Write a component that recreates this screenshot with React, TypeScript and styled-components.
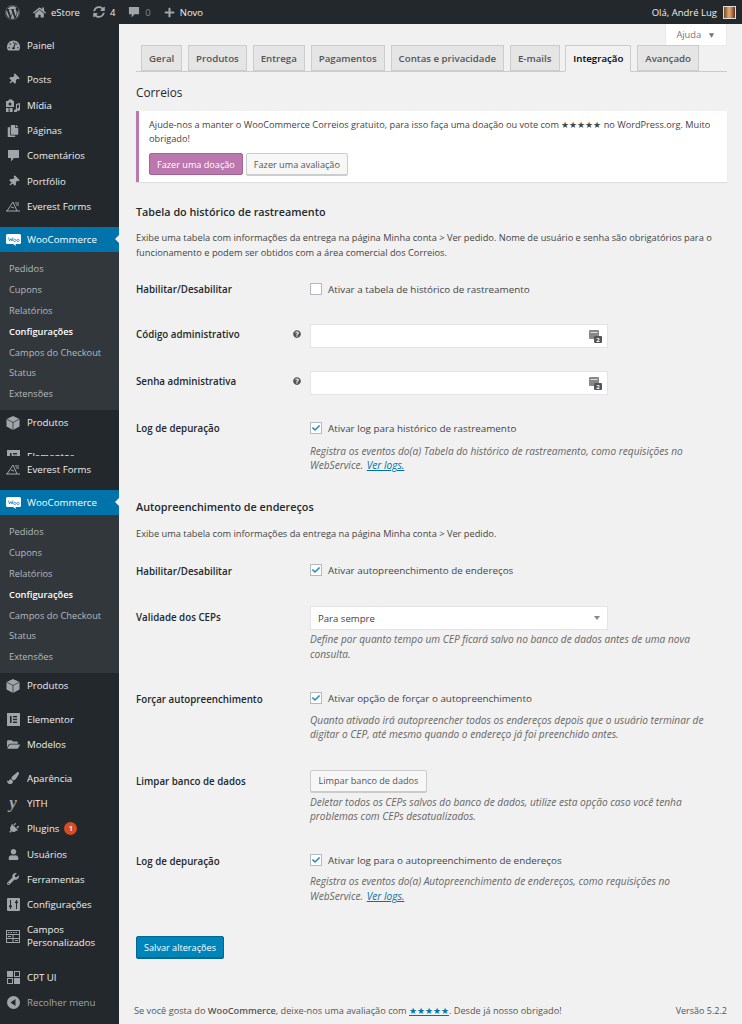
import React from "react";
import styled, { createGlobalStyle } from "styled-components";
import {
  FaWordpress, FaHome, FaSyncAlt, FaPlus, FaThumbtack, FaTachometerAlt, FaCopy, FaFolderOpen, FaPaintBrush, FaPlug, FaUser, FaWrench, FaQuestionCircle, FaCheck,
} from "react-icons/fa";

const Global = createGlobalStyle`
  html, body { margin: 0; padding: 0; background: #f1f1f1; }
  body { font-family: "Open Sans", "Liberation Sans", sans-serif; font-size: 9.6px; color: #444; width: 742px; height: 1024px; overflow: hidden; }
  * { box-sizing: border-box; }
`;

const Page = styled.div`width: 742px; height: 1024px; overflow: hidden; display: flex; flex-direction: column;`;
const TopBar = styled.div`height: 24px; flex: none; background: #23282d; color: #eee; display: flex; align-items: center; justify-content: space-between; padding: 0 6px 0 5px;`;
const TopGroup = styled.div`display: flex; align-items: center; gap: 13px;`;
const TopItem = styled.span<{ $dim?: boolean }>`display: flex; align-items: center; gap: 5px; font-size: 9.5px; color: ${p => (p.$dim ? "#82878c" : "#eee")}; svg { color: #a0a5aa; }`;
const Avatar = styled.span`width: 13px; height: 13px; background: linear-gradient(90deg, #7a4a20, #e0a878 45%, #d0905c 60%, #5e3418); border: 1px solid #ddd; margin-left: 1px;`;
const Body = styled.div`flex: 1; display: flex; min-height: 0;`;
const Side = styled.nav`width: 119px; flex: none; background: #23282d; height: 1000px; overflow: hidden;`;
const Clip = styled.div<{ $h: number }>`height: ${p => p.$h}px; overflow: hidden;`;
const Item = styled.div<{ $h?: number; $mt?: number; $dim?: boolean }>`
  height: ${p => p.$h ?? 25.3}px; margin-top: ${p => p.$mt ?? 0}px; display: flex; align-items: center; padding-left: 6px; gap: 7px;
  color: ${p => (p.$dim ? "#a0a5aa" : "#eee")}; line-height: 13px; font-size: 9.7px;
  svg { color: #a0a5aa; flex: none; }
`;
const IconBox = styled.span`width: 14px; display: flex; justify-content: center; flex: none;`;
const Tilted = styled.span`display: inline-flex; transform: rotate(45deg);`;
const ActiveSpacer = styled.div`height: 8px;`;
const ActiveItem = styled.div`position: relative; height: 25px; background: #0073aa; color: #fff; display: flex; align-items: center; padding-left: 6px; gap: 6px; font-size: 9.7px;
  &::after { content: ""; position: absolute; right: 0; top: 8px; border: 4.5px solid transparent; border-right-color: #f1f1f1; border-left: 0; }
`;
const Sub = styled.div`background: #32373c; padding: 6.5px 0 6px; color: #b4b9be;`;
const SubItem = styled.div<{ $cur?: boolean }>`height: 20.8px; display: flex; align-items: center; padding-left: 9px; font-size: 9.3px; color: ${p => (p.$cur ? "#fff" : "#b4b9be")}; font-weight: ${p => (p.$cur ? 600 : 400)};`;
const Badge = styled.span`width: 13px; height: 13px; border-radius: 50%; background: #d54e21; color: #fff; font-size: 7.5px; font-weight: 600; display: inline-flex; align-items: center; justify-content: center; margin-left: -2px;`;
const YIcon = styled.span`color: #a0a5aa; font: italic 700 17px/14px "Liberation Serif", serif;`;
const Main = styled.main`flex: 1; min-width: 0; padding: 0 15px 0 17px; display: flex; flex-direction: column;`;
const HelpRow = styled.div`height: 21px; flex: none; display: flex; justify-content: flex-end;`;
const HelpTab = styled.div`width: 60px; height: 21px; margin-right: 1px; background: #fff; color: #72777c; display: flex; align-items: center; justify-content: center; gap: 6px; box-shadow: 0 0 1px rgba(0,0,0,.15); font-size: 9.3px; span { font-size: 8.5px; }`;
const Tabs = styled.div`height: 27px; display: flex; gap: 5.7px; padding-left: 5px; border-bottom: 1px solid #ccc; flex: none;`;
const Tab = styled.div<{ $on?: boolean }>`height: ${p => (p.$on ? 27 : 26)}px; padding: 0 7.1px; display: flex; align-items: center; font-size: 9.7px; font-weight: 600; white-space: nowrap; border: 1px solid #ccc; color: ${p => (p.$on ? "#000" : "#555")}; background: ${p => (p.$on ? "#f1f1f1" : "#e5e5e5")}; ${p => (p.$on ? "border-bottom-color: #f1f1f1;" : "")}`;
const Heading = styled.h2`margin: 12px 0 0; font-size: 11.8px; font-weight: 400; color: #23282d; line-height: 17px;`;
const Notice = styled.div`margin-top: 10px; background: #fff; border-left: 3px solid #bb77ae; padding: 7px 10px 7px 10px; box-shadow: 0 1px 1px rgba(0,0,0,.08);`;
const NoticeText = styled.p`margin: 0; line-height: 14px; font-size: 9.2px;`;
const ButtonRow = styled.div`display: flex; gap: 3px; margin-top: 7px;`;
const Btn = styled.div<{ $variant?: "woo" | "primary" }>`height: 22px; padding: 0 7px; border-radius: 2px; display: inline-flex; align-items: center; font-size: 9.15px; white-space: nowrap; ${p => p.$variant === "woo" ? "background:#bb77ae;color:#fff;border:1px solid #a36597;" : p.$variant === "primary" ? "background:#0085ba;color:#fff;border:1px solid #006799;box-shadow:0 1px 0 #006799;" : "background:#f7f7f7;color:#555;border:1px solid #ccc;box-shadow:0 1px 0 #ccc;"}`;
const FieldBtn = styled(Btn)`margin-top: -5.5px; padding: 0 7.5px; display: flex; width: fit-content;`;
const SectionTitle = styled.h3<{ $mt: number }>`margin: ${p => p.$mt}px 0 0; font-size: 10.8px; font-weight: 600; color: #23282d; line-height: 15px;`;
const Intro = styled.p<{ $mt: number }>`margin: ${p => p.$mt}px 0 0; font-size: 9.25px; line-height: 14.8px; width: 590px;`;
const Row = styled.div<{ $h: number }>`display: flex; height: ${p => p.$h}px; flex: none;`;
const Label = styled.div`width: 174px; flex: none; display: flex; justify-content: space-between; align-items: flex-start; font-weight: 600; color: #23282d; font-size: 9.75px; padding-right: 9px; line-height: 13px; svg { color: #555; margin-top: 2px; }`;
const Field = styled.div`flex: 1; min-width: 0;`;
const CheckRow = styled.label<{ $up?: boolean }>`display: flex; align-items: center; gap: 6px; font-size: 9.85px; line-height: 14px; height: 13px; ${p => (p.$up ? "margin: -1.5px 0 1.5px;" : "")}`;
const Box = styled.span`width: 12px; height: 12px; background: #fff; border: 1px solid #b4b9be; display: inline-flex; align-items: center; justify-content: center; color: #1e8cbe; flex: none;`;
const Desc = styled.p<{ $mt: number }>`margin: ${p => p.$mt}px 0 0; width: 405px; font-style: italic; color: #666; font-size: 10.15px; line-height: 14.3px;`;
const Link = styled.a`color: #0073aa; text-decoration: underline;`;
const LogLink = styled(Link)`margin-left: 1px;`;
const InputBox = styled.div`margin-top: -3.5px; width: 298px; height: 24px; background: #fff; border: 1px solid #e4e4e4; display: flex; align-items: center; justify-content: flex-end; padding-right: 5px; color: #777;`;
const SelectBox = styled.div`margin-top: -5px; width: 298px; height: 24px; background: #fff; border: 1px solid #e4e4e4; display: flex; align-items: center; justify-content: space-between; padding: 0 7px; color: #444; font-size: 9.6px; &::after { content: ""; border: 3px solid transparent; border-top: 4px solid #888; border-bottom: 0; }`;
const Footer = styled.div`margin: auto 0 7px -2px; display: flex; justify-content: space-between; color: #555; font-size: 9.2px; strong { font-weight: 600; } > span:last-child { font-size: 9px; }`;
const Spacer = styled.div<{ $h: number }>`height: ${p => p.$h}px; flex: none;`;

const Key = () => (
  <svg width="13" height="13" viewBox="0 0 13 13"><rect x="0" y="0" width="10" height="9" rx="1" fill="#888" /><rect x="1.5" y="2" width="7" height="1" fill="#ddd" /><rect x="5" y="6" width="8" height="7" rx="1" fill="#555" /><text x="9" y="12" fontSize="6" fill="#fff" textAnchor="middle" fontWeight="700" fontFamily="Open Sans">2</text></svg>
);
const Everest = () => (
  <svg width="14" height="12" viewBox="0 0 14 12" fill="none" stroke="#a0a5aa" strokeWidth="1"><path d="M1 11 L7 2 L11 11 M0 11 H14 M5 7 L8 8 M9 3 H13 M10 5 H13" /></svg>
);
const ElementorIcon = () => (
  <svg width="13" height="13" viewBox="0 0 13 13"><rect width="13" height="13" fill="#a0a5aa" /><rect x="3" y="3" width="1.6" height="7" fill="#23282d" /><rect x="6" y="3" width="4" height="1.4" fill="#23282d" /><rect x="6" y="5.8" width="4" height="1.4" fill="#23282d" /><rect x="6" y="8.6" width="4" height="1.4" fill="#23282d" /></svg>
);
const Bubble = ({ s = 13 }: { s?: number }) => (
  <svg width={s} height={s} viewBox="0 0 13 13" fill="#a0a5aa"><path d="M1 1 H12 V9 H7 L4 12.5 V9 H1 Z" /></svg>
);
const Media = () => (
  <svg width="14" height="13" viewBox="0 0 14 13" fill="#a0a5aa"><path d="M0 2 H2 L3 .5 H6 L7 2 H8 V8 H0 Z" /><circle cx="4" cy="5" r="1.5" fill="#23282d" /><path d="M10 5 L14 4 V10.5 A1.5 1.5 0 1 1 12.8 9 V5.6 L11 6 V12 A1.5 1.5 0 1 1 9.8 10.6 Z" /><rect x="0" y="9" width="2.6" height="4" /><rect x="3.6" y="9" width="3" height="4" /></svg>
);
const Box3D = () => (
  <svg width="14" height="14" viewBox="0 0 14 14" fill="#a0a5aa"><path d="M7 0 L13.5 3 V10.5 L7 14 L.5 10.5 V3 Z" /><path d="M.5 3 L7 6.5 L13.5 3 M7 6.5 V14" stroke="#23282d" strokeWidth=".7" fill="none" /></svg>
);
const Woo = () => (
  <svg width="15" height="12" viewBox="0 0 15 12"><path d="M1.5 0 H13.5 A1.5 1.5 0 0 1 15 1.5 V8.5 A1.5 1.5 0 0 1 13.5 10 H9.5 L10 12 L7 10 H1.5 A1.5 1.5 0 0 1 0 8.5 V1.5 A1.5 1.5 0 0 1 1.5 0 Z" fill="#fff" /><path d="M2.5 3.5 L3.5 7 L5 4.5 L6 7 L7 3.5 M8.8 5.2 a1.2 1.2 0 1 0 .01 0 M12 5.2 a1.2 1.2 0 1 0 .01 0" fill="none" stroke="#0073aa" strokeWidth=".7" /></svg>
);
const Settings = () => (
  <svg width="13" height="13" viewBox="0 0 13 13"><rect width="13" height="13" rx="1" fill="#a0a5aa" /><path d="M3.5 2 V11 M9.5 2 V11" stroke="#23282d" strokeWidth="1" /><rect x="2" y="7.5" width="3" height="1.6" fill="#23282d" /><rect x="8" y="3.5" width="3" height="1.6" fill="#23282d" /></svg>
);
const Fields = () => (
  <svg width="14" height="13" viewBox="0 0 14 13" fill="none" stroke="#a0a5aa"><rect x=".5" y=".5" width="13" height="12" /><path d="M.5 4.5 H13.5 M.5 8.5 H13.5 M7 4.5 V12.5" /><path d="M2 2.5 H12" strokeDasharray="1.5 1" /><rect x="2" y="6" width="3" height="1" fill="#a0a5aa" stroke="none" /><rect x="9" y="10" width="3" height="1" fill="#a0a5aa" stroke="none" /></svg>
);
const CptGrid = () => (
  <svg width="13" height="13" viewBox="0 0 13 13" stroke="#a0a5aa" fill="none"><rect x=".5" y=".5" width="5" height="5" fill="#a0a5aa" /><rect x="7.5" y=".5" width="5" height="5" /><rect x=".5" y="7.5" width="5" height="5" /><rect x="7.5" y="7.5" width="5" height="5" fill="#a0a5aa" /></svg>
);
const Collapse = () => (
  <svg width="13" height="13" viewBox="0 0 13 13"><circle cx="6.5" cy="6.5" r="6.5" fill="#a0a5aa" /><path d="M8.5 3 V10 L3.5 6.5 Z" fill="#23282d" /></svg>
);
const Pin = () => <Tilted><FaThumbtack size={11} /></Tilted>;

const subs = ["Pedidos", "Cupons", "Relatórios", "Configurações", "Campos do Checkout", "Status", "Extensões"];
const SubMenu = () => (
  <Sub>{subs.map(s => <SubItem key={s} $cur={s === "Configurações"}>{s}</SubItem>)}</Sub>
);
const Ic = ({ c }: { c: React.ReactNode }) => <IconBox>{c}</IconBox>;

const Sidebar = () => (
  <Side>
    <Clip $h={432}>
      <Item $mt={9}><Ic c={<FaTachometerAlt size={13} />} />Painel</Item>
      <Item $mt={9}><Ic c={<Pin />} />Posts</Item>
      <Item><Ic c={<Media />} />Mídia</Item>
      <Item><Ic c={<FaCopy size={12} />} />Páginas</Item>
      <Item><Ic c={<Bubble />} />Comentários</Item>
      <Item><Ic c={<Pin />} />Portfólio</Item>
      <Item><Ic c={<Everest />} />Everest Forms</Item>
      <ActiveSpacer />
      <ActiveItem><Woo />WooCommerce</ActiveItem>
      <SubMenu />
      <Item><Ic c={<Box3D />} />Produtos</Item>
      <Item $mt={8}><Ic c={<ElementorIcon />} />Elementor</Item>
    </Clip>
    <Item $h={26}><Ic c={<Everest />} />Everest Forms</Item>
    <ActiveSpacer />
    <ActiveItem><Woo />WooCommerce</ActiveItem>
    <SubMenu />
    <Item><Ic c={<Box3D />} />Produtos</Item>
    <Item $mt={8}><Ic c={<ElementorIcon />} />Elementor</Item>
    <Item><Ic c={<FaFolderOpen size={13} />} />Modelos</Item>
    <Item $mt={8.5}><Ic c={<FaPaintBrush size={12} />} />Aparência</Item>
    <Item><Ic c={<YIcon>y</YIcon>} />YITH</Item>
    <Item><Ic c={<Tilted><FaPlug size={11} /></Tilted>} />Plugins <Badge>1</Badge></Item>
    <Item><Ic c={<FaUser size={11} />} />Usuários</Item>
    <Item><Ic c={<FaWrench size={12} />} />Ferramentas</Item>
    <Item><Ic c={<Settings />} />Configurações</Item>
    <Item $h={38}><Ic c={<Fields />} /><span>Campos<br />Personalizados</span></Item>
    <Item $mt={10} $h={24.3}><Ic c={<CptGrid />} />CPT UI</Item>
    <Item $dim><Ic c={<Collapse />} />Recolher menu</Item>
  </Side>
);

export default function App() {
  return (
    <Page>
      <Global />
      <TopBar>
        <TopGroup>
          <FaWordpress size={15} color="#a0a5aa" />
          <TopItem><FaHome size={13} />eStore</TopItem>
          <TopItem><FaSyncAlt size={12} />4</TopItem>
          <TopItem $dim><Bubble s={12} />0</TopItem>
          <TopItem><FaPlus size={11} />Novo</TopItem>
        </TopGroup>
        <TopItem>Olá, André Lug <Avatar /></TopItem>
      </TopBar>
      <Body>
        <Sidebar />
        <Main>
          <HelpRow><HelpTab>Ajuda <span>▼</span></HelpTab></HelpRow>
          <Tabs>
            <Tab>Geral</Tab><Tab>Produtos</Tab><Tab>Entrega</Tab><Tab>Pagamentos</Tab><Tab>Contas e privacidade</Tab><Tab>E-mails</Tab><Tab $on>Integração</Tab><Tab>Avançado</Tab>
          </Tabs>
          <Heading>Correios</Heading>
          <Notice>
            <NoticeText>Ajude-nos a manter o WooCommerce Correios gratuito, para isso faça uma doação ou vote com ★★★★★ no WordPress.org. Muito obrigado!</NoticeText>
            <ButtonRow><Btn $variant="woo">Fazer uma doação</Btn><Btn>Fazer uma avaliação</Btn></ButtonRow>
          </Notice>
          <SectionTitle $mt={22}>Tabela do histórico de rastreamento</SectionTitle>
          <Intro $mt={12}>Exibe uma tabela com informações da entrega na página Minha conta &gt; Ver pedido. Nome de usuário e senha são obrigatórios para o funcionamento e podem ser obtidos com a área comercial dos Correios.</Intro>
          <Spacer $h={22} />
          <Row $h={45}><Label>Habilitar/Desabilitar</Label><Field><CheckRow><Box />Ativar a tabela de histórico de rastreamento</CheckRow></Field></Row>
          <Row $h={47}><Label>Código administrativo<FaQuestionCircle size={8} /></Label><Field><InputBox><Key /></InputBox></Field></Row>
          <Row $h={47}><Label>Senha administrativa<FaQuestionCircle size={8} /></Label><Field><InputBox><Key /></InputBox></Field></Row>
          <Row $h={77}><Label>Log de depuração</Label><Field><CheckRow><Box><FaCheck size={8} /></Box>Ativar log para histórico de rastreamento</CheckRow><Desc $mt={9}>Registra os eventos do(a) Tabela do histórico de rastreamento, como requisições no WebService. <LogLink>Ver logs.</LogLink></Desc></Field></Row>
          <SectionTitle $mt={0}>Autopreenchimento de endereços</SectionTitle>
          <Intro $mt={13}>Exibe uma tabela com informações da entrega na página Minha conta &gt; Ver pedido.</Intro>
          <Spacer $h={24} />
          <Row $h={46}><Label>Habilitar/Desabilitar</Label><Field><CheckRow $up><Box><FaCheck size={8} /></Box>Ativar autopreenchimento de endereços</CheckRow></Field></Row>
          <Row $h={82}><Label>Validade dos CEPs</Label><Field><SelectBox>Para sempre</SelectBox><Desc $mt={2}>Define por quanto tempo um CEP ficará salvo no banco de dados antes de uma nova consulta.</Desc></Field></Row>
          <Row $h={82}><Label>Forçar autopreenchimento</Label><Field><CheckRow $up><Box><FaCheck size={8} /></Box>Ativar opção de forçar o autopreenchimento</CheckRow><Desc $mt={8}>Quanto ativado irá autopreencher todos os endereços depois que o usuário terminar de digitar o CEP, até mesmo quando o endereço já foi preenchido antes.</Desc></Field></Row>
          <Row $h={80}><Label>Limpar banco de dados</Label><Field><FieldBtn>Limpar banco de dados</FieldBtn><Desc $mt={3}>Deletar todos os CEPs salvos do banco de dados, utilize esta opção caso você tenha problemas com CEPs desatualizados.</Desc></Field></Row>
          <Row $h={81}><Label>Log de depuração</Label><Field><CheckRow $up><Box><FaCheck size={8} /></Box>Ativar log para o autopreenchimento de endereços</CheckRow><Desc $mt={7.5}>Registra os eventos do(a) Autopreenchimento de endereços, como requisições no WebService. <LogLink>Ver logs.</LogLink></Desc></Field></Row>
          <div><Btn $variant="primary">Salvar alterações</Btn></div>
          <Footer><span>Se você gosta do <strong>WooCommerce</strong>, deixe-nos uma avaliação com <Link>★★★★★</Link>. Desde já nosso obrigado!</span><span>Versão 5.2.2</span></Footer>
        </Main>
      </Body>
    </Page>
  );
}
